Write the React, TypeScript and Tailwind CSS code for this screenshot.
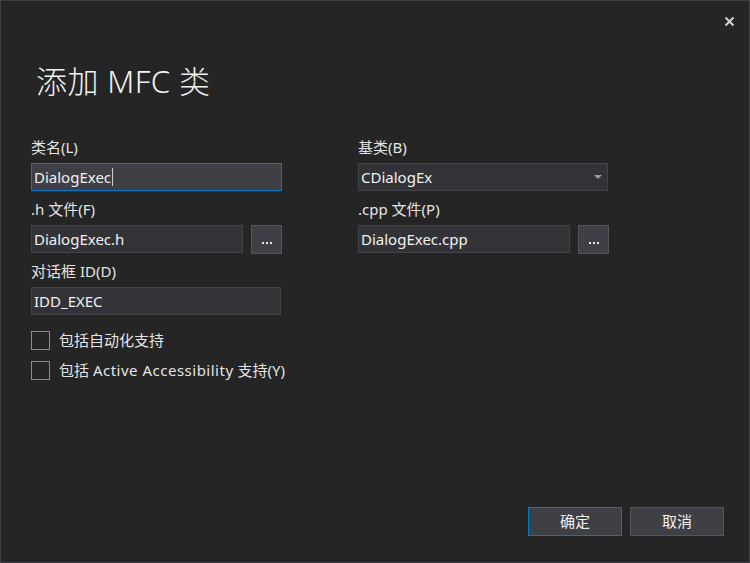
import React from "react";

const font = { fontFamily: '"Noto Sans", "Noto Sans CJK SC", sans-serif' };

function Label({ children }: { children: React.ReactNode }) {
  return <div className="h-[22px] leading-[22px] mb-[5px] text-[15px] text-[#e4e4e4]">{children}</div>;
}

function Field({ value, focused = false, className = "" }: { value: string; focused?: boolean; className?: string }) {
  return (
    <div
      className={
        "h-[28px] flex items-center pl-[2px] text-[15px] text-[#f1f1f1] border " +
        (focused ? "border-[#007acc] bg-[#3f3f46] " : "border-[#434346] bg-[#333337] ") +
        className
      }
    >
      <span>{value}</span>
      {focused && <span className="w-px h-[18px] bg-[#cfcfcf] ml-[1px]" />}
    </div>
  );
}

function Browse() {
  return (
    <div className="w-[31px] h-[29px] border border-[#555555] bg-[#3f3f46] flex items-center justify-center ml-[8px]">
      <div className="flex gap-[2px] mt-[6px]">
        <span className="w-[2px] h-[2px] bg-[#e6e6e6]" />
        <span className="w-[2px] h-[2px] bg-[#e6e6e6]" />
        <span className="w-[2px] h-[2px] bg-[#e6e6e6]" />
      </div>
    </div>
  );
}

function Check({ children }: { children: React.ReactNode }) {
  return (
    <div className="flex items-center h-[19px] mb-[11px] whitespace-nowrap">
      <div className="w-[19px] h-[19px] shrink-0 border border-[#8c8c8c]" />
      <span className="ml-[9px] text-[15px] text-[#e4e4e4] whitespace-nowrap">{children}</span>
    </div>
  );
}

export default function App() {
  return (
    <div style={font} className="w-[750px] h-[563px] bg-[#252526] border border-[#3f3f46] flex flex-col box-border">
      <div className="flex justify-end pt-[15px] pr-[14px] h-[30px]">
        <svg width="11" height="11" viewBox="0 0 11 11">
          <path d="M1.5 1.5 L9.5 9.5 M9.5 1.5 L1.5 9.5" stroke="#d4d4d4" strokeWidth="2" />
        </svg>
      </div>
      <div className="pl-[35px] mt-[30px] h-[40px] leading-[40px] text-[31px] tracking-[0.4px] text-[#f1f1f1] font-light">添加 MFC 类</div>
      <div className="flex pl-[30px] mt-[35px]">
        <div className="w-[251px] flex flex-col">
          <Label>类名(L)</Label>
          <Field value="DialogExec" focused />
          <div className="mt-[7px]" />
          <Label>.h 文件(F)</Label>
          <div className="flex">
            <Field value="DialogExec.h" className="w-[212px]" />
            <Browse />
          </div>
          <div className="mt-[6px]" />
          <Label>对话框 ID(D)</Label>
          <Field value="IDD_EXEC" className="w-[250px]" />
          <div className="mt-[16px]" />
          <Check>包括自动化支持</Check>
          <Check>
            包括 <span className="tracking-[0.5px]">Active Accessibility</span> 支持(Y)
          </Check>
        </div>
        <div className="w-[251px] flex flex-col ml-[76px]">
          <Label>基类(B)</Label>
          <div className="h-[28px] flex items-center justify-between pl-[2px] pr-[5px] text-[15px] text-[#f1f1f1] border border-[#434346] bg-[#333337] w-[250px]">
            <span>CDialogEx</span>
            <svg width="8" height="4" viewBox="0 0 8 4">
              <path d="M0 0 L8 0 L4 4 Z" fill="#9a9a9a" />
            </svg>
          </div>
          <div className="mt-[7px]" />
          <Label>.cpp 文件(P)</Label>
          <div className="flex">
            <Field value="DialogExec.cpp" className="w-[212px]" />
            <Browse />
          </div>
        </div>
      </div>
      <div className="flex-1" />
      <div className="flex justify-end gap-[8px] pr-[25px] pb-[26px]">
        <div className="w-[94px] h-[29px] border border-[#007acc] bg-[#3f3f46] flex items-center justify-center text-[15px] text-[#f1f1f1]">确定</div>
        <div className="w-[94px] h-[29px] border border-[#555555] bg-[#3f3f46] flex items-center justify-center text-[15px] text-[#f1f1f1]">取消</div>
      </div>
    </div>
  );
}
